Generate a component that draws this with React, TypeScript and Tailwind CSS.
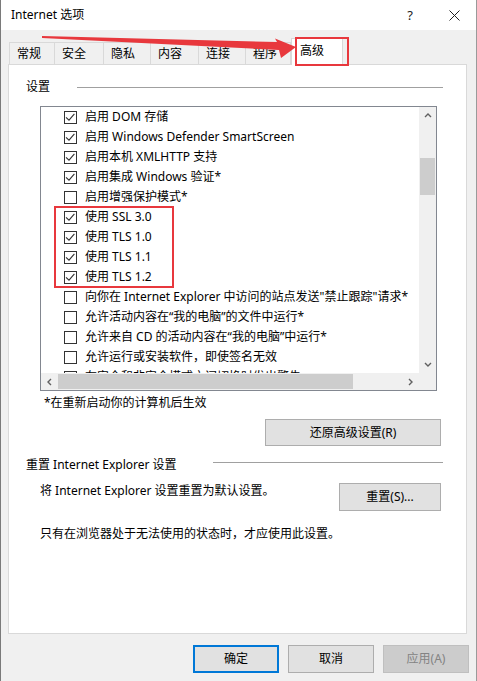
import React from "react";

const rows: [string, boolean][] = [
  ["启用 DOM 存储", true],
  ["启用 Windows Defender SmartScreen", true],
  ["启用本机 XMLHTTP 支持", true],
  ["启用集成 Windows 验证*", true],
  ["启用增强保护模式*", false],
  ["使用 SSL 3.0", true],
  ["使用 TLS 1.0", true],
  ["使用 TLS 1.1", true],
  ["使用 TLS 1.2", true],
  ['向你在 Internet Explorer 中访问的站点发送"禁止跟踪"请求*', false],
  ["允许活动内容在“我的电脑”的文件中运行*", false],
  ["允许来自 CD 的活动内容在“我的电脑”中运行*", false],
  ["允许运行或安装软件，即使签名无效", false],
  ["在安全和非安全模式之间切换时发出警告", false],
];

function Check({ checked }: { checked: boolean }) {
  return (
    <span className="w-[13px] h-[13px] border border-[#333333] bg-white shrink-0 flex items-center justify-center">
      {checked && (
        <svg width="11" height="11" viewBox="0 0 11 11">
          <path d="M1 5.3 L4 8.2 L9.4 1.8" fill="none" stroke="#333333" strokeWidth="1.1" />
        </svg>
      )}
    </span>
  );
}

function Chevron({ dir }: { dir: "up" | "down" | "left" | "right" }) {
  const d =
    dir === "up"
      ? "M1 5 L4 2 L7 5"
      : dir === "down"
      ? "M1 2 L4 5 L7 2"
      : dir === "left"
      ? "M5 1 L2 4 L5 7"
      : "M2 1 L5 4 L2 7";
  return (
    <svg width="8" height="8" viewBox="0 0 8 8">
      <path d={d} fill="none" stroke="#606060" strokeWidth="1.4" />
    </svg>
  );
}

const tabs: [string, number][] = [
  ["常规", 46],
  ["安全", 50],
  ["隐私", 48],
  ["内容", 49],
  ["连接", 48],
  ["程序", 46],
];

export default function App() {
  return (
    <div className="relative w-[477px] h-[681px] bg-[#f0f0f0] overflow-hidden text-[12px] leading-[16px] text-black [font-family:'Noto_Sans','Noto_Sans_CJK_SC',sans-serif] shadow-[inset_1px_0_0_#7a7a7a,inset_-1px_0_0_#9a9a9a]">
      {/* Title bar */}
      <div className="h-[30px] bg-white flex items-center pl-[10px] ml-[1px] mr-[1px]">
        <span className="text-[12px]">Internet 选项</span>
        <span className="ml-auto mr-[36px] text-[13px] text-[#222]">?</span>
        <svg width="11" height="11" viewBox="0 0 11 11" className="mr-[16px]">
          <path d="M0.5 0.5 L10.5 10.5 M10.5 0.5 L0.5 10.5" stroke="#222" strokeWidth="1" />
        </svg>
      </div>

      {/* Tabs */}
      <div className="h-[34px] flex items-end pl-[9px] relative z-10">
        {tabs.map(([t, w]) => (
          <div
            key={t}
            style={{ width: w }}
            className="h-[22px] border border-b-0 border-[#d9d9d9] -ml-px first:ml-0 bg-[#f0f0f0] flex items-center pl-[7px] text-[12px]"
          >
            {t}
          </div>
        ))}
        <div className="w-[52px] h-[27px] -mb-px bg-white border border-b-0 border-[#d9d9d9] flex items-start pt-[4px] pl-[8px]">
          高级
        </div>
      </div>

      {/* Panel */}
      <div className="ml-[8px] w-[459px] h-[570px] border border-[#d9d9d9] bg-white flex flex-col">
        {/* 设置 */}
        <div className="mt-[14px] flex items-center pl-[17px]">
          <div className="w-[51px]">设置</div>
          <div className="w-[366px] h-px bg-[#a0a0a0]" />
        </div>

        {/* Listbox */}
        <div className="mt-[11px] ml-[31px] w-[397px] h-[285px] border border-[#828790] flex flex-col">
          <div className="flex h-[266px]">
            <div className="relative w-[378px] h-[266px] overflow-hidden whitespace-nowrap">
              {rows.map(([t, c]) => (
                <div key={t} className="h-[20px] flex items-center pl-[23px] gap-[8px]">
                  <Check checked={c} />
                  <span>{t}</span>
                </div>
              ))}
              <div className="absolute left-[13px] top-[99px] w-[120px] h-[82px] border-[2.5px] border-[#e8383d]" />
            </div>
            <div className="w-[17px] h-[266px] bg-[#f0f0f0] flex flex-col">
              <div className="h-[17px] flex items-center justify-center">
                <Chevron dir="up" />
              </div>
              <div className="flex-1 relative">
                <div className="mt-[34px] mx-auto w-[15px] h-[37px] bg-[#cdcdcd]" />
              </div>
              <div className="h-[17px] flex items-center justify-center">
                <Chevron dir="down" />
              </div>
            </div>
          </div>
          <div className="flex h-[17px]">
            <div className="w-[378px] h-[17px] bg-[#f0f0f0] flex items-center">
              <div className="w-[17px] h-[17px] flex items-center justify-center">
                <Chevron dir="left" />
              </div>
              <div className="w-[295px] h-[15px] bg-[#cdcdcd]" />
              <div className="flex-1" />
              <div className="w-[17px] h-[17px] flex items-center justify-center">
                <Chevron dir="right" />
              </div>
            </div>
            <div className="w-[17px] h-[17px] bg-[#f0f0f0]" />
          </div>
        </div>

        <div className="mt-[4px] ml-[35px]">*在重新启动你的计算机后生效</div>

        <div className="mt-[8px] ml-[256px] w-[176px] h-[27px] bg-[#e1e1e1] border border-[#adadad] flex items-center justify-center">
          还原高级设置(R)
        </div>

        <div className="mt-[11px] flex items-center pl-[17px]">
          <div className="w-[187px]">重置 Internet Explorer 设置</div>
          <div className="w-[230px] h-px bg-[#a0a0a0] -mt-[5px]" />
        </div>

        <div className="mt-[10px] flex items-start pl-[31px]">
          <div className="w-[299px]">将 Internet Explorer 设置重置为默认设置。</div>
          <div className="w-[102px] h-[28px] bg-[#e1e1e1] border border-[#adadad] flex items-center justify-center">
            重置(S)...
          </div>
        </div>

        <div className="mt-[15px] ml-[31px]">只有在浏览器处于无法使用的状态时，才应使用此设置。</div>
      </div>

      {/* Bottom buttons */}
      <div className="mt-[11px] flex justify-end gap-[9px] pr-[8px]">
        <div className="w-[86px] h-[28px] bg-[#e1e1e1] border-2 border-[#0078d7] flex items-center justify-center">
          确定
        </div>
        <div className="w-[86px] h-[28px] bg-[#e1e1e1] border border-[#adadad] flex items-center justify-center">
          取消
        </div>
        <div className="w-[86px] h-[28px] bg-[#cccccc] border border-[#bfbfbf] text-[#838383] flex items-center justify-center">
          应用(A)
        </div>
      </div>

      {/* Annotations */}
      <div className="absolute left-[295px] top-[37px] w-[54px] h-[29px] border-[2.5px] border-[#e8383d] z-20" />
      <svg className="absolute left-0 top-0 z-20 pointer-events-none" width="477" height="70" viewBox="0 0 477 70">
        <polygon
          points="42,36 277,42 275,38.5 296,47 281,58 279,50 42,38"
          fill="#e8383d"
        />
      </svg>
    </div>
  );
}
